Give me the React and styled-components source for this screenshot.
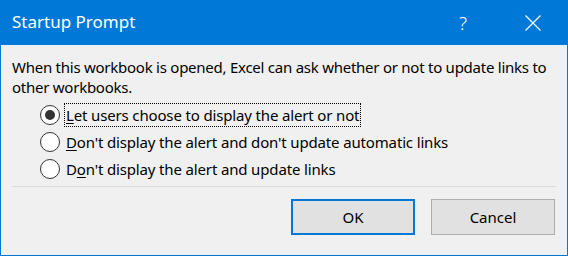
import React from "react";
import styled, { createGlobalStyle } from "styled-components";

const Global = createGlobalStyle`
  html, body { margin: 0; padding: 0; background: #f0f0f0; }
  * { box-sizing: border-box; }
`;

const Window = styled.div`
  width: 568px;
  height: 256px;
  border: 1px solid #0078d7;
  border-top: none;
  background: #f0f0f0;
  display: flex;
  flex-direction: column;
  font-family: "Noto Sans", "Open Sans", sans-serif;
  color: #000;
`;

const TitleBar = styled.div`
  height: 45px;
  margin: 0 -1px;
  background: #0078d7;
  display: flex;
  align-items: center;
  padding-left: 12px;
  color: #fff;
`;

const Title = styled.div`
  flex: 1;
  font-size: 17px;
  line-height: 22px;
  padding-bottom: 2px;
`;

const CaptionButton = styled.div`
  width: 70px;
  height: 45px;
  display: flex;
  align-items: center;
  justify-content: center;
  font-size: 19px;
  font-weight: 300;
  font-family: "Noto Sans", sans-serif;
  color: #fff;
`;

const Body = styled.div`
  flex: 1;
  padding: 12px 11px 0 11px;
  display: flex;
  flex-direction: column;
`;

const Message = styled.p`
  margin: 0;
  font-size: 15px;
  line-height: 20px;
  letter-spacing: -0.25px;
`;

const Options = styled.div`
  margin-top: 4px;
  padding-left: 28px;
  display: flex;
  flex-direction: column;
`;

const OptionRow = styled.label`
  height: 27px;
  display: flex;
  align-items: center;
  gap: 4px;
  font-size: 15px;
  letter-spacing: -0.15px;
`;

const Radio = styled.span`
  width: 20px;
  height: 20px;
  border-radius: 50%;
  border: 1px solid #333;
  background: #fff;
  display: flex;
  align-items: center;
  justify-content: center;
  flex-shrink: 0;
  &::after {
    content: "";
    width: 10px;
    height: 10px;
    border-radius: 50%;
    background: ${(p) => (p.$checked ? "#333" : "transparent")};
  }
`;

const LabelText = styled.span`
  height: 24px;
  line-height: 22px;
  padding: 0 1px;
  border: 1px dotted ${(p) => (p.$focused ? "#000" : "transparent")};
  white-space: nowrap;
`;

const Key = styled.span`
  text-decoration: underline;
  text-underline-offset: 2px;
`;

const Separator = styled.hr`
  margin: 4px 0 0 0;
  border: none;
  border-top: 1px solid #dadada;
  height: 0;
`;

const Footer = styled.div`
  display: flex;
  justify-content: flex-end;
  gap: 16px;
  padding: 12px 1px 0 0;
`;

const Button = styled.button`
  width: 124px;
  height: 36px;
  background: #e1e1e1;
  border: ${(p) => (p.$default ? "2px solid #0078d7" : "1px solid #adadad")};
  font-family: "Noto Sans", sans-serif;
  font-size: 15px;
  color: #000;
  padding: 0;
`;

const CloseIcon = () => (
  <svg width="16" height="16" viewBox="0 0 16 16">
    <path d="M0.5 0.5 L15.5 15.5 M15.5 0.5 L0.5 15.5" stroke="#fff" strokeWidth="1.2" />
  </svg>
);

export default function App() {
  return (
    <>
      <Global />
      <Window>
        <TitleBar>
          <Title>Startup Prompt</Title>
          <CaptionButton>?</CaptionButton>
          <CaptionButton>
            <CloseIcon />
          </CaptionButton>
        </TitleBar>
        <Body>
          <Message>
            When this workbook is opened, Excel can ask whether or not to update links to
            other workbooks.
          </Message>
          <Options>
            <OptionRow>
              <Radio $checked />
              <LabelText $focused>
                <Key>L</Key>et users choose to display the alert or not
              </LabelText>
            </OptionRow>
            <OptionRow>
              <Radio />
              <LabelText>
                <Key>D</Key>on't display the alert and don't update automatic links
              </LabelText>
            </OptionRow>
            <OptionRow>
              <Radio />
              <LabelText>
                D<Key>o</Key>n't display the alert and update links
              </LabelText>
            </OptionRow>
          </Options>
          <Separator />
          <Footer>
            <Button $default>OK</Button>
            <Button>Cancel</Button>
          </Footer>
        </Body>
      </Window>
    </>
  );
}
